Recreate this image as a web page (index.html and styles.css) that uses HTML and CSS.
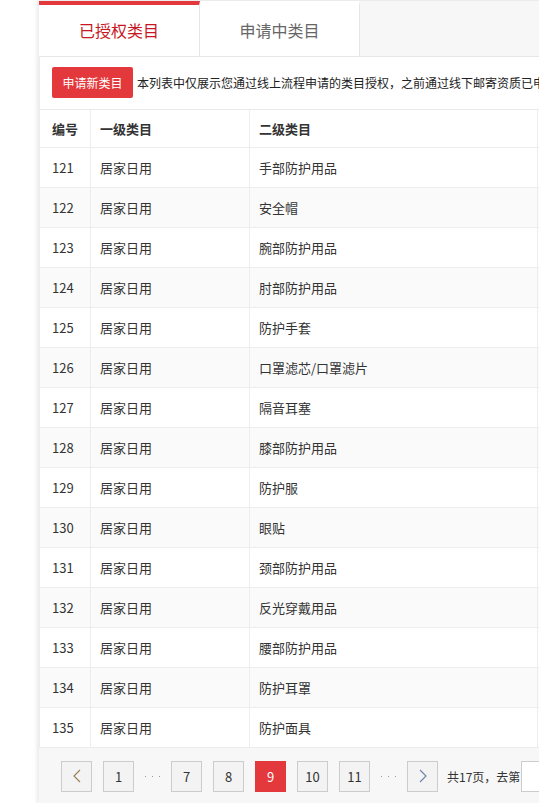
FILE: index.html
```html
<!DOCTYPE html>
<html lang="zh-CN">
<head>
<meta charset="utf-8">
<title>类目授权</title>
<link rel="stylesheet" href="styles.css">
</head>
<body>
<div class="panel">
  <div class="tabs">
    <div class="tab active">已授权类目</div>
    <div class="tab">申请中类目</div>
  </div>
  <div class="toolbar">
    <button class="btn-apply">申请新类目</button>
    <span class="desc">本列表中仅展示您通过线上流程申请的类目授权，之前通过线下邮寄资质已申</span>
  </div>
  <div class="table">
    <div class="row head">
      <div class="cell c1">编号</div>
      <div class="cell c2">一级类目</div>
      <div class="cell c3">二级类目</div>
      <div class="cell c4"></div>
    </div>
    <div class="row"><div class="cell c1">121</div><div class="cell c2">居家日用</div><div class="cell c3">手部防护用品</div><div class="cell c4"></div></div>
    <div class="row alt"><div class="cell c1">122</div><div class="cell c2">居家日用</div><div class="cell c3">安全帽</div><div class="cell c4"></div></div>
    <div class="row"><div class="cell c1">123</div><div class="cell c2">居家日用</div><div class="cell c3">腕部防护用品</div><div class="cell c4"></div></div>
    <div class="row alt"><div class="cell c1">124</div><div class="cell c2">居家日用</div><div class="cell c3">肘部防护用品</div><div class="cell c4"></div></div>
    <div class="row"><div class="cell c1">125</div><div class="cell c2">居家日用</div><div class="cell c3">防护手套</div><div class="cell c4"></div></div>
    <div class="row alt"><div class="cell c1">126</div><div class="cell c2">居家日用</div><div class="cell c3">口罩滤芯/口罩滤片</div><div class="cell c4"></div></div>
    <div class="row"><div class="cell c1">127</div><div class="cell c2">居家日用</div><div class="cell c3">隔音耳塞</div><div class="cell c4"></div></div>
    <div class="row alt"><div class="cell c1">128</div><div class="cell c2">居家日用</div><div class="cell c3">膝部防护用品</div><div class="cell c4"></div></div>
    <div class="row"><div class="cell c1">129</div><div class="cell c2">居家日用</div><div class="cell c3">防护服</div><div class="cell c4"></div></div>
    <div class="row alt"><div class="cell c1">130</div><div class="cell c2">居家日用</div><div class="cell c3">眼贴</div><div class="cell c4"></div></div>
    <div class="row"><div class="cell c1">131</div><div class="cell c2">居家日用</div><div class="cell c3">颈部防护用品</div><div class="cell c4"></div></div>
    <div class="row alt"><div class="cell c1">132</div><div class="cell c2">居家日用</div><div class="cell c3">反光穿戴用品</div><div class="cell c4"></div></div>
    <div class="row"><div class="cell c1">133</div><div class="cell c2">居家日用</div><div class="cell c3">腰部防护用品</div><div class="cell c4"></div></div>
    <div class="row alt"><div class="cell c1">134</div><div class="cell c2">居家日用</div><div class="cell c3">防护耳罩</div><div class="cell c4"></div></div>
    <div class="row"><div class="cell c1">135</div><div class="cell c2">居家日用</div><div class="cell c3">防护面具</div><div class="cell c4"></div></div>
  </div>
  <div class="pager">
    <a class="pg arrow"><svg width="8" height="14" viewBox="0 0 8 14"><polyline points="7,1 1,7 7,13" fill="none" stroke="#a08060" stroke-width="1.2"/></svg></a>
    <a class="pg">1</a>
    <span class="dots"><i></i><i></i><i></i></span>
    <a class="pg">7</a>
    <a class="pg">8</a>
    <a class="pg current">9</a>
    <a class="pg">10</a>
    <a class="pg">11</a>
    <span class="dots"><i></i><i></i><i></i></span>
    <a class="pg arrow"><svg width="8" height="14" viewBox="0 0 8 14"><polyline points="1,1 7,7 1,13" fill="none" stroke="#6a86b0" stroke-width="1.2"/></svg></a>
    <span class="total">共17页，去第</span>
    <input class="goto" type="text">
  </div>
</div>
</body>
</html>
```

FILE: styles.css
```css
html, body {
  margin: 0;
  padding: 0;
  background: #fff;
  overflow: hidden;
}
body {
  font-family: "Noto Sans CJK SC", "Microsoft YaHei", sans-serif;
  color: #333;
  font-size: 12px;
}
.panel {
  margin-left: 39px;
  width: 720px;
  background: #fff;
  box-shadow: -2px 0 4px rgba(0, 0, 0, 0.09);
}
.tabs {
  display: flex;
  height: 55px;
  background: #f7f7f7;
  border-top: 1px solid #ececec;
  border-bottom: 1px solid #e6e6e6;
}
.tab {
  width: 160px;
  border-right: 1px solid #e6e6e6;
  border-top: 4px solid transparent;
  background: #fff;
  display: flex;
  align-items: center;
  justify-content: center;
  font-size: 16px;
  color: #666;
  box-sizing: border-box;
  padding-bottom: 2px;
}
.tab.active {
  width: 161px;
  border-top-color: #e4393c;
  color: #c81623;
}
.toolbar {
  display: flex;
  align-items: center;
  padding: 10px 0 11px 12px;
  white-space: nowrap;
  border-left: 1px solid #eee;
}
.btn-apply {
  width: 81px;
  height: 31px;
  background: #e4393c;
  color: #fff;
  border: none;
  border-radius: 2px;
  font-family: inherit;
  font-size: 12px;
  padding: 0;
  flex: none;
}
.desc {
  margin-left: 4px;
  font-size: 12px;
  color: #222;
}
.table {
  border-top: 1px solid #eaeaea;
}
.row {
  display: grid;
  grid-template-columns: 52px 159px 288px 1fr;
  height: 40px;
  border-bottom: 1px solid #ededed;
  box-sizing: border-box;
  background: #fff;
}
.row.head {
  height: 38px;
}
.row.alt {
  background: #fafafa;
}
.cell {
  display: flex;
  align-items: center;
  padding-left: 9px;
  border-right: 1px solid #ededed;
  font-size: 13px;
  color: #333;
  white-space: nowrap;
  overflow: hidden;
}
.cell.c1 {
  padding-left: 12px;
  border-left: 1px solid #ededed;
}
.cell.c4 {
  border-right: none;
}
.head .cell {
  font-weight: 700;
  color: #333;
}
.pager {
  display: flex;
  align-items: center;
  height: 56px;
  background: #f7f7f7;
  padding-left: 22px;
  gap: 11px;
  white-space: nowrap;
}
.pg {
  width: 31px;
  height: 31px;
  box-sizing: border-box;
  border: 1px solid #ccc;
  background: #f3f3f3;
  display: flex;
  align-items: center;
  justify-content: center;
  font-size: 13px;
  color: #333;
  flex: none;
}
.pg.current {
  background: #e4393c;
  border-color: #e4393c;
  color: #fff;
}
.dots {
  width: 15px;
  display: flex;
  justify-content: space-between;
  align-items: center;
  flex: none;
}
.dots i {
  width: 1px;
  height: 1px;
  background: #999;
}
.total {
  margin-left: -2px;
  font-size: 12px;
  color: #333;
  flex: none;
}
.goto {
  width: 40px;
  height: 31px;
  box-sizing: border-box;
  border: 1px solid #ccc;
  background: #fff;
  margin-left: -10px;
  flex: none;
}
```
